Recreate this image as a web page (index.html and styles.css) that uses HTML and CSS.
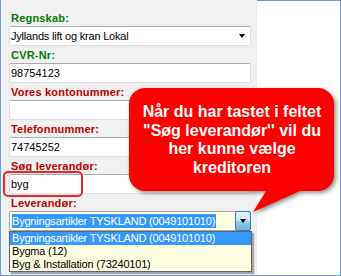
FILE: index.html
```html
<!DOCTYPE html>
<html lang="da">
  <head>
    <meta charset="UTF-8" />
    <title>Leverandør</title>
    <link rel="stylesheet" href="styles.css">
  </head>
  <body>
    <div class="window">
      <div class="panel">
        <div class="field">
          <div class="label label-green">Regnskab:</div>
          <div class="combo">
            <span class="combo-text">Jyllands lift og kran Lokal</span>
            <span class="arrow"></span>
          </div>
        </div>
        <div class="field">
          <div class="label label-green">CVR-Nr:</div>
          <div class="textbox">98754123</div>
        </div>
        <div class="field">
          <div class="label label-red">Vores kontonummer:</div>
          <div class="textbox"></div>
        </div>
        <div class="field">
          <div class="label label-red">Telefonnummer:</div>
          <div class="textbox">74745252</div>
        </div>
        <div class="field field-search">
          <div class="label label-red">Søg leverandør:</div>
          <div class="textbox">byg</div>
          <div class="highlight"></div>
        </div>
        <div class="field">
          <div class="label label-red">Leverandør:</div>
          <div class="combo combo-yellow">
            <span class="combo-selected">Bygningsartikler TYSKLAND (0049101010)</span>
            <span class="combo-button"><span class="arrow"></span></span>
          </div>
          <ul class="dropdown">
            <li class="dropdown-active">Bygningsartikler TYSKLAND (0049101010)</li>
            <li>Bygma (12)</li>
            <li>Byg &amp; Installation (73240101)</li>
          </ul>
        </div>
      </div>
      <div class="blank"></div>

      <svg class="bubble" width="341" height="276" viewBox="0 0 341 276">
        <path d="M145 88 H318 A16 16 0 0 1 334 104 V175 A16 16 0 0 1 318 191 H300 L253 212 L266 191 H145 A16 16 0 0 1 129 175 V104 A16 16 0 0 1 145 88 Z" fill="#ff0000" />
      </svg>
      <div class="bubble-text">
        Når du har tastet i feltet<br />
        "Søg leverandør'' vil du<br />
        her kunne vælge<br />
        kreditoren
      </div>
    </div>
  </body>
</html>
```
FILE: styles.css
```css
body {
  margin: 0;
  font-family: "Liberation Sans", Arial, sans-serif;
  font-size: 11px;
  color: #000;
}
.window {
  position: relative;
  width: 341px;
  height: 276px;
  box-sizing: border-box;
  display: flex;
  border-right: 1px solid #6a9bd8;
  border-bottom: 1px solid #6a9bd8;
  background: #fff;
}
.panel {
  width: 257px;
  box-sizing: border-box;
  border-left: 1px solid #6a9bd8;
  background: #f0f0f0;
  padding: 12px 6px 0 8px;
}
.blank {
  flex: 1;
  border-top: 1px solid #6a9bd8;
}
.field {
  position: relative;
  margin-bottom: 3px;
}
.label {
  font-weight: bold;
  line-height: 13px;
  letter-spacing: 0.2px;
  margin: 0 0 1px 2px;
}
.label-green {
  color: #008000;
}
.label-red {
  color: #c00000;
}
.textbox,
.combo {
  width: 242px;
  height: 20px;
  box-sizing: border-box;
  background: #fff;
  border: 1px solid #dcdfe6;
  border-top-color: #abadb3;
  border-radius: 2px;
  padding: 0 1px;
  line-height: 18px;
  white-space: nowrap;
  overflow: hidden;
}
.combo-text,
.combo-selected,
.dropdown li {
  letter-spacing: -0.2px;
}
.combo {
  display: flex;
  align-items: center;
}
.combo-text {
  flex: 1;
}
.arrow {
  width: 0;
  height: 0;
  border-left: 3.5px solid transparent;
  border-right: 3.5px solid transparent;
  border-top: 4px solid #000;
  margin-right: 4px;
}
.combo-yellow {
  background: #ffffe1;
  border-color: #a0a4ad;
  padding: 0 0 0 2px;
  overflow: visible;
}
.combo-selected {
  line-height: 14px;
  padding-right: 1px;
  color: #fff;
  background: #3399ff;
  margin-right: auto;
}
.combo-button {
  width: 16px;
  height: 20px;
  box-sizing: border-box;
  margin: -1px -1px -1px 0;
  border: 1px solid #3c7fb1;
  border-radius: 2px;
  background: linear-gradient(#e5f4fc, #c4e5f6 50%, #98d1ef 51%, #68b3db);
  display: flex;
  align-items: center;
  justify-content: center;
}
.combo-button .arrow {
  margin: 0;
}
.highlight {
  position: absolute;
  left: -6px;
  top: 11px;
  width: 80px;
  height: 26px;
  box-sizing: border-box;
  border: 2px solid #e8262b;
  border-radius: 5px;
}
.dropdown {
  list-style: none;
  margin: 0;
  padding: 0;
  width: 243px;
  box-sizing: border-box;
  background: #ffffe1;
  border: 1px solid #646464;
  box-shadow: 2px 2px 1px rgba(0, 0, 0, 0.3);
}
.dropdown li {
  line-height: 13px;
  padding-left: 2px;
  white-space: nowrap;
}
.dropdown-active {
  background: #3399ff;
  color: #fff;
}
.bubble {
  position: absolute;
  left: 0;
  top: 0;
  filter: drop-shadow(2px 2px 2px rgba(0, 0, 0, 0.45));
}
.bubble-text {
  position: absolute;
  left: 129px;
  top: 103px;
  width: 206px;
  text-align: center;
  color: #fff;
  font-weight: bold;
  font-size: 16px;
  line-height: 18.6px;
}
```
